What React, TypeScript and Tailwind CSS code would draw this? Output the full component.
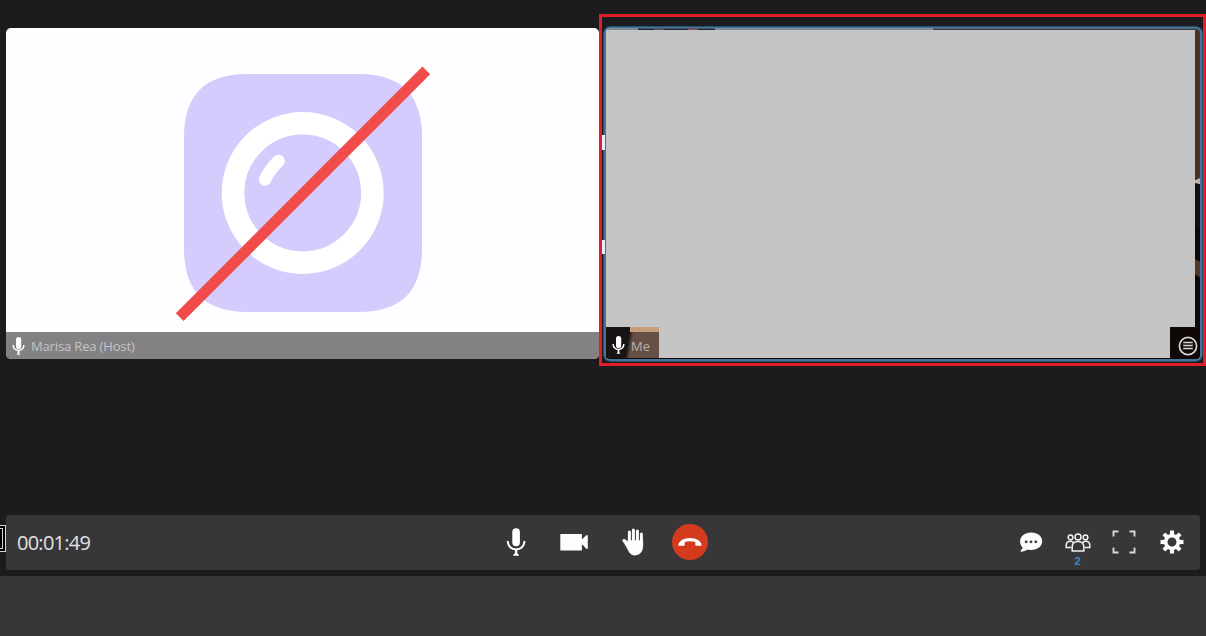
import React from "react";

type IconProps = { className?: string };

function MicIcon({ className }: IconProps) {
  return (
    <svg viewBox="0 0 20 30" className={className} fill="none">
      <rect x="6.3" y="1.2" width="7.6" height="18" rx="3.8" fill="currentColor" />
      <path d="M1.8 14v.8a8.3 7.6 0 0 0 16.6 0V14" stroke="currentColor" strokeWidth="2" />
      <path d="M8.9 22h2.4v4.3l1.6 1.5v.9H7.3v-.9l1.6-1.5z" fill="currentColor" />
    </svg>
  );
}

function SmallMicIcon() {
  return (
    <svg viewBox="0 0 13 20" className="h-[20px] w-[13px] text-white" fill="none">
      <rect x="4" y="1" width="5.200" height="12" rx="2.600" fill="currentColor" />
      <path d="M1.200 9v.5a5.300 5 0 0 0 10.600 0V9" stroke="currentColor" strokeWidth="1.500" />
      <path d="M5.600 14.500h1.800v3l1.100 1.200H4.500l1.100-1.200z" fill="currentColor" />
    </svg>
  );
}

function VideoIcon() {
  return (
    <svg viewBox="0 0 28 18" className="h-[18px] w-[28px]" fill="#fdfdfd">
      <path d="M.3 1h21.600v5.500l2-1.900 2.300-2.400h1.600v13.600h-1.700l-2.200-2.700-2-1.700v6H.3z" />
    </svg>
  );
}

function HandIcon() {
  return (
    <svg viewBox="0 0 22 28" className="h-[28px] w-[22px]" fill="none" stroke="#fdfdfd" strokeLinecap="round">
      <path d="M7.400 4v11M11.400 2v13M15.400 3v12M19.400 6v10" strokeWidth="3" />
      <path
        d="M5.900 12.500h15v5.700c0 5.300-3.300 9-8.100 9-3.100 0-5-1.700-6.300-4.500l-3-5.400L.7 12.900c-.5-.9.300-1.800 1.400-1.700 1.600.2 2.700 1.300 3.800 3.200z"
        fill="#fdfdfd"
        strokeWidth=".4"
      />
    </svg>
  );
}

function HangUpIcon() {
  return (
    <svg viewBox="0 0 24 10" className="h-[10px] w-[24px]" fill="#fff">
      <path d="M.3 8.300C.6 4 5.500.9 12 .9s11.400 3.100 11.700 7.400l-.5.500h-5.200l-.7-.5V5c-3.500-.9-7.100-.9-10.600 0v3.300l-.7.500H.8z" />
    </svg>
  );
}

function ChatIcon() {
  return (
    <svg viewBox="0 0 24 21" className="h-[21px] w-[24px]">
      <path
        fill="#fdfdfd"
        d="M12.200.6C18.500.6 23.200 4.400 23.200 9.300s-4.700 8.800-11 8.800c-1.400 0-2.700-.2-3.900-.6-1.700 1.400-3.800 2.200-6.200 2.200-.6 0-.8-.6-.4-1 1.100-1 1.700-2.200 1.900-3.400C2 13.700 1.100 11.700 1.100 9.400 1.100 4.500 5.900.6 12.200.6z"
      />
      <g fill="#373739">
        <circle cx="7.200" cy="9.800" r="1.400" />
        <circle cx="12" cy="9.800" r="1.400" />
        <circle cx="16.800" cy="9.800" r="1.400" />
      </g>
    </svg>
  );
}

function PeopleIcon() {
  return (
    <svg viewBox="0 0 26 19" className="h-[19px] w-[26px]" fill="none" stroke="#f2f2f2" strokeWidth="1.500">
      <circle cx="5.500" cy="4.400" r="2.300" />
      <circle cx="20.500" cy="4.400" r="2.300" />
      <circle cx="13" cy="4" r="3" />
      <path d="M6.300 14.600H1.200v-2.100c0-2.600 1.700-4.200 4.200-4.200 1.200 0 2 .3 2.900 1M19.700 14.600h5.100v-2.100c0-2.600-1.700-4.200-4.200-4.200-1.200 0-2 .3-2.900 1" />
      <path d="M7.200 17.900v-4c0-3.300 2.300-5.500 5.800-5.500s5.800 2.200 5.800 5.500v4z" />
    </svg>
  );
}

function FullscreenIcon() {
  return (
    <svg viewBox="0 0 24 24" className="h-[24px] w-[24px]" fill="none" stroke="#d8d8d8" strokeWidth="1.900">
      <path d="M1.500 6.500v-5h5M17.500 1.500h5v5M22.500 17.500v5h-5M6.500 22.500h-5v-5" />
    </svg>
  );
}

function GearIcon() {
  const angles = [0, 45, 90, 135, 180, 225, 270, 315];
  return (
    <svg viewBox="-12 -12 24 24" className="h-[24px] w-[24px]">
      <g fill="#fdfdfd">
        {angles.map((angle) => (
          <path key={angle} d="M-2.200-7-1.900-11.500H1.900L2.200-7z" transform={`rotate(${angle})`} />
        ))}
      </g>
      <circle r="6.300" fill="none" stroke="#fdfdfd" strokeWidth="3.600" />
    </svg>
  );
}

function MenuIcon() {
  return (
    <svg viewBox="0 0 20 20" className="h-[20px] w-[20px]" fill="none" stroke="#d9d6d4">
      <circle cx="10" cy="10" r="8.600" strokeWidth="1.700" />
      <path d="M5.200 6.500h9.600M5.200 9.500h9.600M5.200 12.500h9.600" strokeWidth="1.500" />
    </svg>
  );
}

function CameraOffPicture() {
  return (
    <svg viewBox="0 0 593 304" className="h-[304px] w-[593px]" fill="none">
      <path
        fill="#d5cbfc"
        d="M241 46h112c42 0 63 21 63 63v112c0 42-21 63-63 63H241c-42 0-63-21-63-63V109c0-42 21-63 63-63z"
      />
      <circle cx="296.700" cy="165" r="69.700" stroke="#fff" strokeWidth="22.600" />
      <path d="M259 151.500Q263.500 141.500 272.500 133" stroke="#fff" strokeWidth="12.500" strokeLinecap="round" />
      <path d="M173.700 289.200 420.300 42.300" stroke="#f04d4a" strokeWidth="11" />
    </svg>
  );
}

function SelfVideo() {
  return (
    <svg viewBox="0 0 600 336" className="absolute inset-0 h-full w-full">
      <rect width="600" height="336" fill="#0c0909" />
      <rect x="592" y="3" width="8" height="150" fill="#493322" />
      <path d="M592 154l8-3v8l-8-2z" fill="#b8b4ab" />
      <rect x="592" y="160" width="8" height="42" fill="#101013" />
      <path d="M592 233l8 4v17l-8-6z" fill="#4f3928" />
      <rect x="567" y="301" width="33" height="35" fill="#100807" />
    </svg>
  );
}

function VideoTopEdge() {
  return (
    <svg viewBox="0 0 600 4" className="absolute top-0 left-0 h-[4px] w-[600px]">
      <rect x="4" y="2" width="590" height="2" fill="#7d8e98" />
      <rect x="35" y="2.500" width="77" height="1.500" fill="#182536" />
      <rect x="51" y="2.500" width="10" height="1.500" fill="#4b5661" />
      <rect x="85" y="2.500" width="10" height="1.500" fill="#8b4b5d" />
      <rect x="330" y="2.500" width="264" height="1.500" fill="#34404b" />
    </svg>
  );
}

export default function App() {
  return (
    <main className="flex h-[636px] w-[1206px] flex-col overflow-hidden bg-[#1d1b1e] font-['Open_Sans','Noto_Sans',sans-serif]">
      <section className="flex h-[515px] items-start pl-[6px]">
        <article className="mt-[28px] flex h-[331px] w-[593px] flex-col overflow-hidden rounded-[5px] bg-[#fefdff]">
          <CameraOffPicture />
          <footer className="flex h-[27px] items-center bg-[#838183] pl-[6px] text-[#c5c3c5]">
            <SmallMicIcon />
            <span className="ml-[6px] pt-[2px] text-[13px] leading-none tracking-[-0.15px]">Marisa Rea (Host)</span>
          </footer>
        </article>

        <div className="relative mt-[14px] h-[352px] w-[607px] shrink-0 border-[3px] border-[#e01f2a] bg-[#1b1c20] pt-[9px] pl-[1px]">
          <article className="relative h-[336px] w-[600px] overflow-hidden rounded-[7px]">
            <SelfVideo />
            <div className="absolute inset-0 rounded-[7px] border-[3px] border-[#2c506c]" />
            <div className="absolute inset-px rounded-[6px] border-2 border-[#43749a]" />
            <VideoTopEdge />
            <div className="relative flex h-full flex-col pt-[4px] pl-[3px]">
              <div className="h-[297px] w-[589px] bg-[#c4c4c4]" />
              <div className="flex h-[31px]">
                <div className="flex h-full w-[53px] flex-col bg-[linear-gradient(100deg,#191414_42%,#665046_49%)]">
                  <div className="ml-[24px] h-[5px] shrink-0 bg-[#c69e7e]" />
                  <div className="flex h-[26px] items-center pl-[6px]">
                    <SmallMicIcon />
                    <span className="ml-[6px] pt-[3px] text-[13px] leading-none text-[#bbb2ac]">Me</span>
                  </div>
                </div>
                <div className="w-[511px] bg-[#c4c4c4]" />
                <div className="flex items-center pl-[8px] pt-[6px]">
                  <MenuIcon />
                </div>
              </div>
            </div>
          </article>
          <div className="absolute left-0 top-[118px] h-[15px] w-[3px] bg-[#e7efff]" />
          <div className="absolute left-0 top-[223px] h-[14px] w-[3px] bg-[#e7efff]" />
        </div>
      </section>

      <section className="relative flex h-[55px] px-[6px]">
        <div className="absolute left-[-8px] top-[10px] h-[27px] w-[14px] border border-[#d4d4d4] bg-black p-[2px]">
          <div className="h-full w-full border border-[#d4d4d4]" />
        </div>
        <div className="flex h-[55px] w-[1194px] items-center rounded-[3px] bg-[#373739]">
          <time className="w-[490px] pl-[11px] pt-px text-[20px] leading-none tracking-[-0.75px] text-[#e2e2e2]">00:01:49</time>
          <div className="flex w-[523px] items-center pb-[2px]">
            <button aria-label="Microphone" className="ml-[10px] flex w-[20px] justify-center">
              <MicIcon className="h-[30px] w-[20px] text-white" />
            </button>
            <button aria-label="Camera" className="ml-[34px]">
              <VideoIcon />
            </button>
            <button aria-label="Raise hand" className="ml-[34px]">
              <HandIcon />
            </button>
            <button aria-label="Hang up" className="ml-[28px] flex h-[36px] w-[36px] items-center justify-center rounded-full bg-[#d43a1c]">
              <HangUpIcon />
            </button>
          </div>
          <div className="flex items-center pb-px">
            <button aria-label="Chat">
              <ChatIcon />
            </button>
            <button aria-label="Participants" className="relative ml-[21.5px]">
              <PeopleIcon />
              <span className="absolute inset-x-0 top-[23px] text-center font-['Liberation_Sans',sans-serif] text-[11px] font-bold leading-none text-[#4684c6]">2</span>
            </button>
            <button aria-label="Fullscreen" className="ml-[21.5px]">
              <FullscreenIcon />
            </button>
            <button aria-label="Settings" className="ml-[23.5px]">
              <GearIcon />
            </button>
          </div>
        </div>
      </section>

      <div className="mt-[6px] flex-1 bg-[#373739]" />
    </main>
  );
}
